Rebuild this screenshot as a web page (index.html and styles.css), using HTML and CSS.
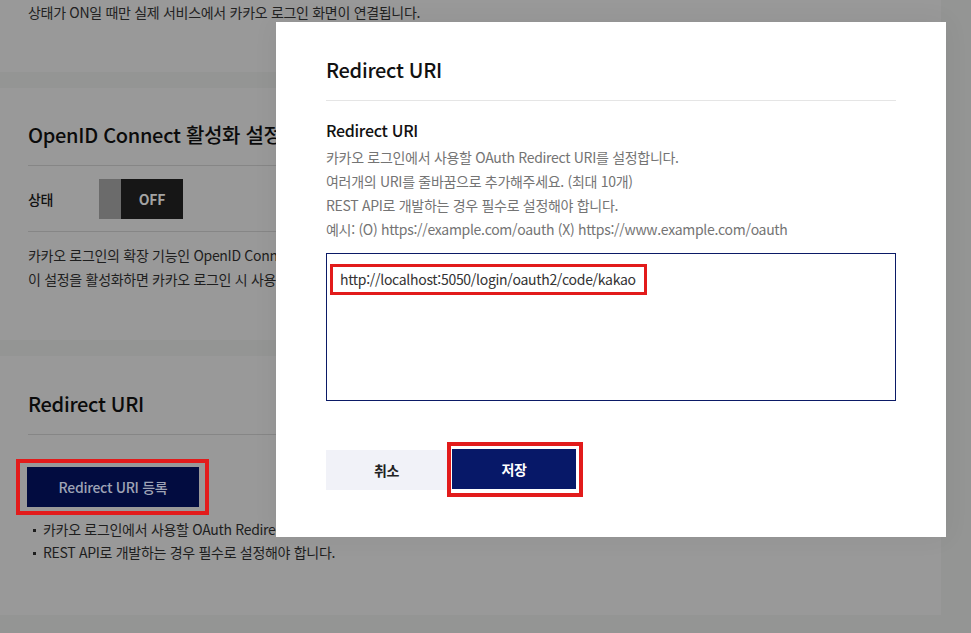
FILE: index.html
```html
<!DOCTYPE html>
<html lang="ko">
<head>
<meta charset="utf-8">
<title>Redirect URI</title>
<link rel="stylesheet" href="styles.css">
</head>
<body>
<div class="page">
  <section class="card card-top">
    <p class="note">상태가 ON일 때만 실제 서비스에서 카카오 로그인 화면이 연결됩니다.</p>
  </section>

  <section class="card card-oidc">
    <h2 class="card-title">OpenID Connect 활성화 설정</h2>
    <div class="state-row">
      <span class="state-label">상태</span>
      <div class="toggle"><span class="toggle-knob"></span><span class="toggle-text">OFF</span></div>
    </div>
    <div class="desc">
      <p>카카오 로그인의 확장 기능인 OpenID Connect를 사용할지 설정합니다.</p>
      <p>이 설정을 활성화하면 카카오 로그인 시 사용자 인증</p>
    </div>
  </section>

  <section class="card card-redirect">
    <h2 class="card-title">Redirect URI</h2>
    <div class="mark mark-bg">
      <button class="btn-register">Redirect URI 등록</button>
    </div>
    <ul class="bullets">
      <li>카카오 로그인에서 사용할 OAuth Redirect URI를 설정합니다. (최대 10개)</li>
      <li>REST API로 개발하는 경우 필수로 설정해야 합니다.</li>
    </ul>
  </section>
</div>

<div class="modal">
  <h1 class="modal-title">Redirect URI</h1>
  <h3 class="field-title">Redirect URI</h3>
  <div class="field-desc">
    <p>카카오 로그인에서 사용할 OAuth Redirect URI를 설정합니다.</p>
    <p>여러개의 URI를 줄바꿈으로 추가해주세요. (최대 10개)</p>
    <p>REST API로 개발하는 경우 필수로 설정해야 합니다.</p>
    <p>예시: (O) https://example.com/oauth (X) https://www.example.com/oauth</p>
  </div>
  <div class="textarea"><span class="mark-text">http://localhost:5050/login/oauth2/code/kakao</span></div>
  <div class="actions">
    <button class="btn btn-cancel">취소</button>
    <div class="mark mark-save"><button class="btn btn-save">저장</button></div>
  </div>
</div>
</body>
</html>
```

FILE: styles.css
```css
* { box-sizing: border-box; }
html, body {
  margin: 0;
  padding: 0;
  width: 971px;
  height: 633px;
  overflow: hidden;
  background: #949594;
  font-family: "Noto Sans CJK KR", "Noto Sans", sans-serif;
  letter-spacing: -0.3px;
}
p, h1, h2, h3, ul { margin: 0; padding: 0; }
button { letter-spacing: inherit; }

.page {
  width: 941px;
  display: flex;
  flex-direction: column;
  gap: 16px;
}

.card {
  background: #999999;
  padding: 0 28px;
}

.card-top {
  height: 72px;
}
.note {
  font-size: 14px;
  line-height: 24px;
  color: #222;
}

.card-oidc {
  height: 252px;
  padding-top: 32px;
}
.card-title {
  font-size: 20px;
  font-weight: 500;
  line-height: 30px;
  color: #0b0b0b;
  padding-bottom: 15px;
  border-bottom: 1px solid #868686;
}
.state-row {
  display: flex;
  align-items: center;
  padding: 13px 0 12px;
  border-bottom: 1px solid #868686;
}
.state-label {
  width: 71px;
  font-size: 14px;
  font-weight: 500;
  color: #111;
}
.toggle {
  display: flex;
  width: 84px;
  height: 40px;
}
.toggle-knob {
  width: 22px;
  background: #6b6b6b;
}
.toggle-text {
  flex: 1;
  background: #161616;
  color: #a3a3a3;
  font-size: 14px;
  font-weight: 700;
  display: flex;
  align-items: center;
  justify-content: center;
}
.desc {
  margin-top: 11px;
  font-size: 14px;
  line-height: 24px;
  color: #1e1e1e;
}

.card-redirect {
  height: 259px;
  padding-top: 33px;
}
.mark {
  border: 4px solid #e21b1b;
}
.mark-bg {
  display: inline-flex;
  margin: 24px 0 0 -12px;
  padding: 4px 6px 4px 7px;
}
.btn-register {
  width: 172px;
  height: 40px;
  border: 0;
  background: #020c40;
  color: #9ea3b5;
  font-family: inherit;
  font-size: 14px;
  font-weight: 500;
}
.bullets {
  list-style: none;
  margin-top: 3px;
  padding-left: 15px;
  font-size: 14px;
  line-height: 23px;
  color: #1e1e1e;
}
.bullets li { position: relative; }
.bullets li::before {
  content: "";
  position: absolute;
  left: -10px;
  top: 11px;
  width: 3px;
  height: 3px;
  background: #1e1e1e;
}

.modal {
  position: absolute;
  left: 276px;
  top: 22px;
  width: 670px;
  height: 515px;
  background: #ffffff;
  padding: 33px 50px 0;
  box-shadow: 0 0 24px rgba(0, 0, 0, 0.06);
}
.modal-title {
  font-size: 20px;
  font-weight: 500;
  line-height: 30px;
  color: #111;
  padding-bottom: 15px;
  border-bottom: 1px solid #e5e5e5;
}
.field-title {
  margin-top: 17px;
  font-size: 16px;
  font-weight: 500;
  line-height: 24px;
  color: #111;
}
.field-desc {
  margin-top: 3px;
  font-size: 14px;
  line-height: 24px;
  color: #747474;
}
.textarea {
  margin-top: 12px;
  height: 148px;
  border: 1px solid #0b1a66;
  padding: 10px 3px;
}
.mark-text {
  display: inline-block;
  border: 3px solid #e21b1b;
  padding: 0 8px 0 7px;
  font-size: 14px;
  line-height: 25px;
  color: #333;
}
.actions {
  margin-top: 41px;
  display: flex;
  align-items: center;
}
.btn {
  height: 40px;
  border: 0;
  font-family: inherit;
  font-size: 14px;
  font-weight: 700;
}
.btn-cancel {
  width: 121px;
  background: #f1f2f8;
  color: #222;
}
.mark-save {
  display: flex;
  padding: 3px 3px 4px 1px;
}
.btn-save {
  width: 124px;
  background: #071868;
  color: #fff;
}
```
